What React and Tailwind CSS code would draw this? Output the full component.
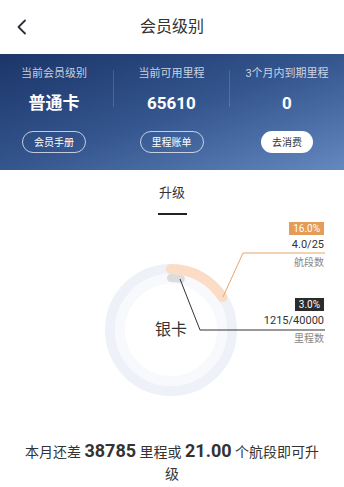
import React from 'react';

const FONT = "font-['Roboto','Noto_Sans_CJK_SC',sans-serif]";

const stats = [
  { label: '当前会员级别', value: '普通卡', btn: '会员手册', w: 'w-[113px] pr-[5px]' },
  { label: '当前可用里程', value: '65610', btn: '里程账单', w: 'w-[115px]' },
  { label: '3个月内到期里程', value: '0', btn: '去消费', w: 'flex-1', solid: true },
];

// polar helper for the ring arcs
const pt = (cx, cy, r, deg) => {
  const a = ((deg - 90) * Math.PI) / 180;
  return [cx + r * Math.cos(a), cy + r * Math.sin(a)];
};
const arc = (cx, cy, r, pct) => {
  const [x1, y1] = pt(cx, cy, r, 0);
  const [x2, y2] = pt(cx, cy, r, pct * 360);
  return `M ${x1} ${y1} A ${r} ${r} 0 ${pct > 0.5 ? 1 : 0} 1 ${x2} ${y2}`;
};

const App = () => {
  return (
    <div className={`w-[344px] h-[487px] bg-white overflow-hidden ${FONT}`}>
      {/* Top bar */}
      <div className="h-[54px] flex items-center relative">
        <svg className="ml-[15px] w-[14px] h-[16px]" viewBox="0 0 14 16" fill="none">
          <path d="M10 1.5 L3.5 8 L10 14.5" stroke="#2a2f3a" strokeWidth="1.8" strokeLinecap="round" strokeLinejoin="round" />
        </svg>
        <div className="absolute inset-0 flex items-center justify-center text-[16px] text-[#333]">会员级别</div>
      </div>

      {/* Banner */}
      <div className="h-[116px] bg-gradient-to-br from-[#1b3568] via-[#34558e] to-[#6588c0] flex pt-[13px]">
        {stats.map((s, i) => (
          <React.Fragment key={s.label}>
            {i > 0 && <div className="w-px h-[37px] mt-[3px] bg-white/15" />}
            <div className={`${s.w} flex flex-col items-center`}>
              <div className="text-[11px] leading-[14px] text-white/75">{s.label}</div>
              <div className="mt-[12px] text-[17px] leading-[20px] font-bold text-white">{s.value}</div>
              <div
                className={`mt-[18px] h-[22px] px-[11px] rounded-full flex items-center text-[10px] ${s.solid ? 'bg-white text-[#333]' : 'border border-white/70 text-white'}`}
              >
                {s.btn}
              </div>
            </div>
          </React.Fragment>
        ))}
      </div>

      {/* Tab */}
      <div className="flex flex-col items-center pt-[15px]">
        <div className="text-[13px] leading-[16px] text-[#333]">升级</div>
        <div className="mt-[12px] w-[29px] h-[2px] bg-[#222]" />
      </div>

      {/* Chart */}
      <div className="relative h-[190px] mt-[-1px]">
        <svg className="absolute inset-0" width="344" height="190" viewBox="0 0 344 190">
          <circle cx="171" cy="116" r="61" fill="none" stroke="#eef1f8" strokeWidth="10" />
          <circle cx="171" cy="116" r="51" fill="none" stroke="#f8f9fc" strokeWidth="10" />
          <path d={arc(171, 116, 61, 0.16)} fill="none" stroke="#fcdcc5" strokeWidth="10" strokeLinecap="round" />
          <path d={arc(171, 116, 52, 0.03)} fill="none" stroke="#dcdcdc" strokeWidth="8" strokeLinecap="round" />
          <polyline points="223,83 243,39 325,39" fill="none" stroke="#e8a468" strokeWidth="1" />
          <polyline points="180,65 200,116 325,116" fill="none" stroke="#333" strokeWidth="1" />
        </svg>

        <div className="absolute left-0 top-[106px] w-[342px] text-center text-[16px] leading-[20px] text-[#333]">银卡</div>

        {/* flights label */}
        <div className="absolute right-[20px] top-[8px] flex flex-col items-end">
          <div className="h-[13px] px-[4px] bg-[#e59c58] text-white text-[10px] leading-[13px]">16.0%</div>
          <div className="mt-[3px] text-[11px] leading-[14px] text-[#333]">4.0/25</div>
          <div className="mt-[4px] text-[10px] leading-[14px] text-[#888]">航段数</div>
        </div>

        {/* miles label */}
        <div className="absolute right-[20px] top-[84px] flex flex-col items-end">
          <div className="h-[13px] px-[4px] bg-[#2b2b2b] text-white text-[10px] leading-[13px]">3.0%</div>
          <div className="mt-[3px] text-[11px] leading-[14px] text-[#333]">1215/40000</div>
          <div className="mt-[4px] text-[10px] leading-[14px] text-[#888]">里程数</div>
        </div>
      </div>

      {/* Bottom hint */}
      <div className="px-[21px] mt-[37px] text-center text-[14px] leading-[22px] text-[#333]">
        本月还差 <span className="text-[18px] leading-none font-bold">38785</span> 里程或{' '}
        <span className="text-[18px] leading-none font-bold">21.00</span> 个航段即可升级
      </div>
    </div>
  );
};

export default App;
